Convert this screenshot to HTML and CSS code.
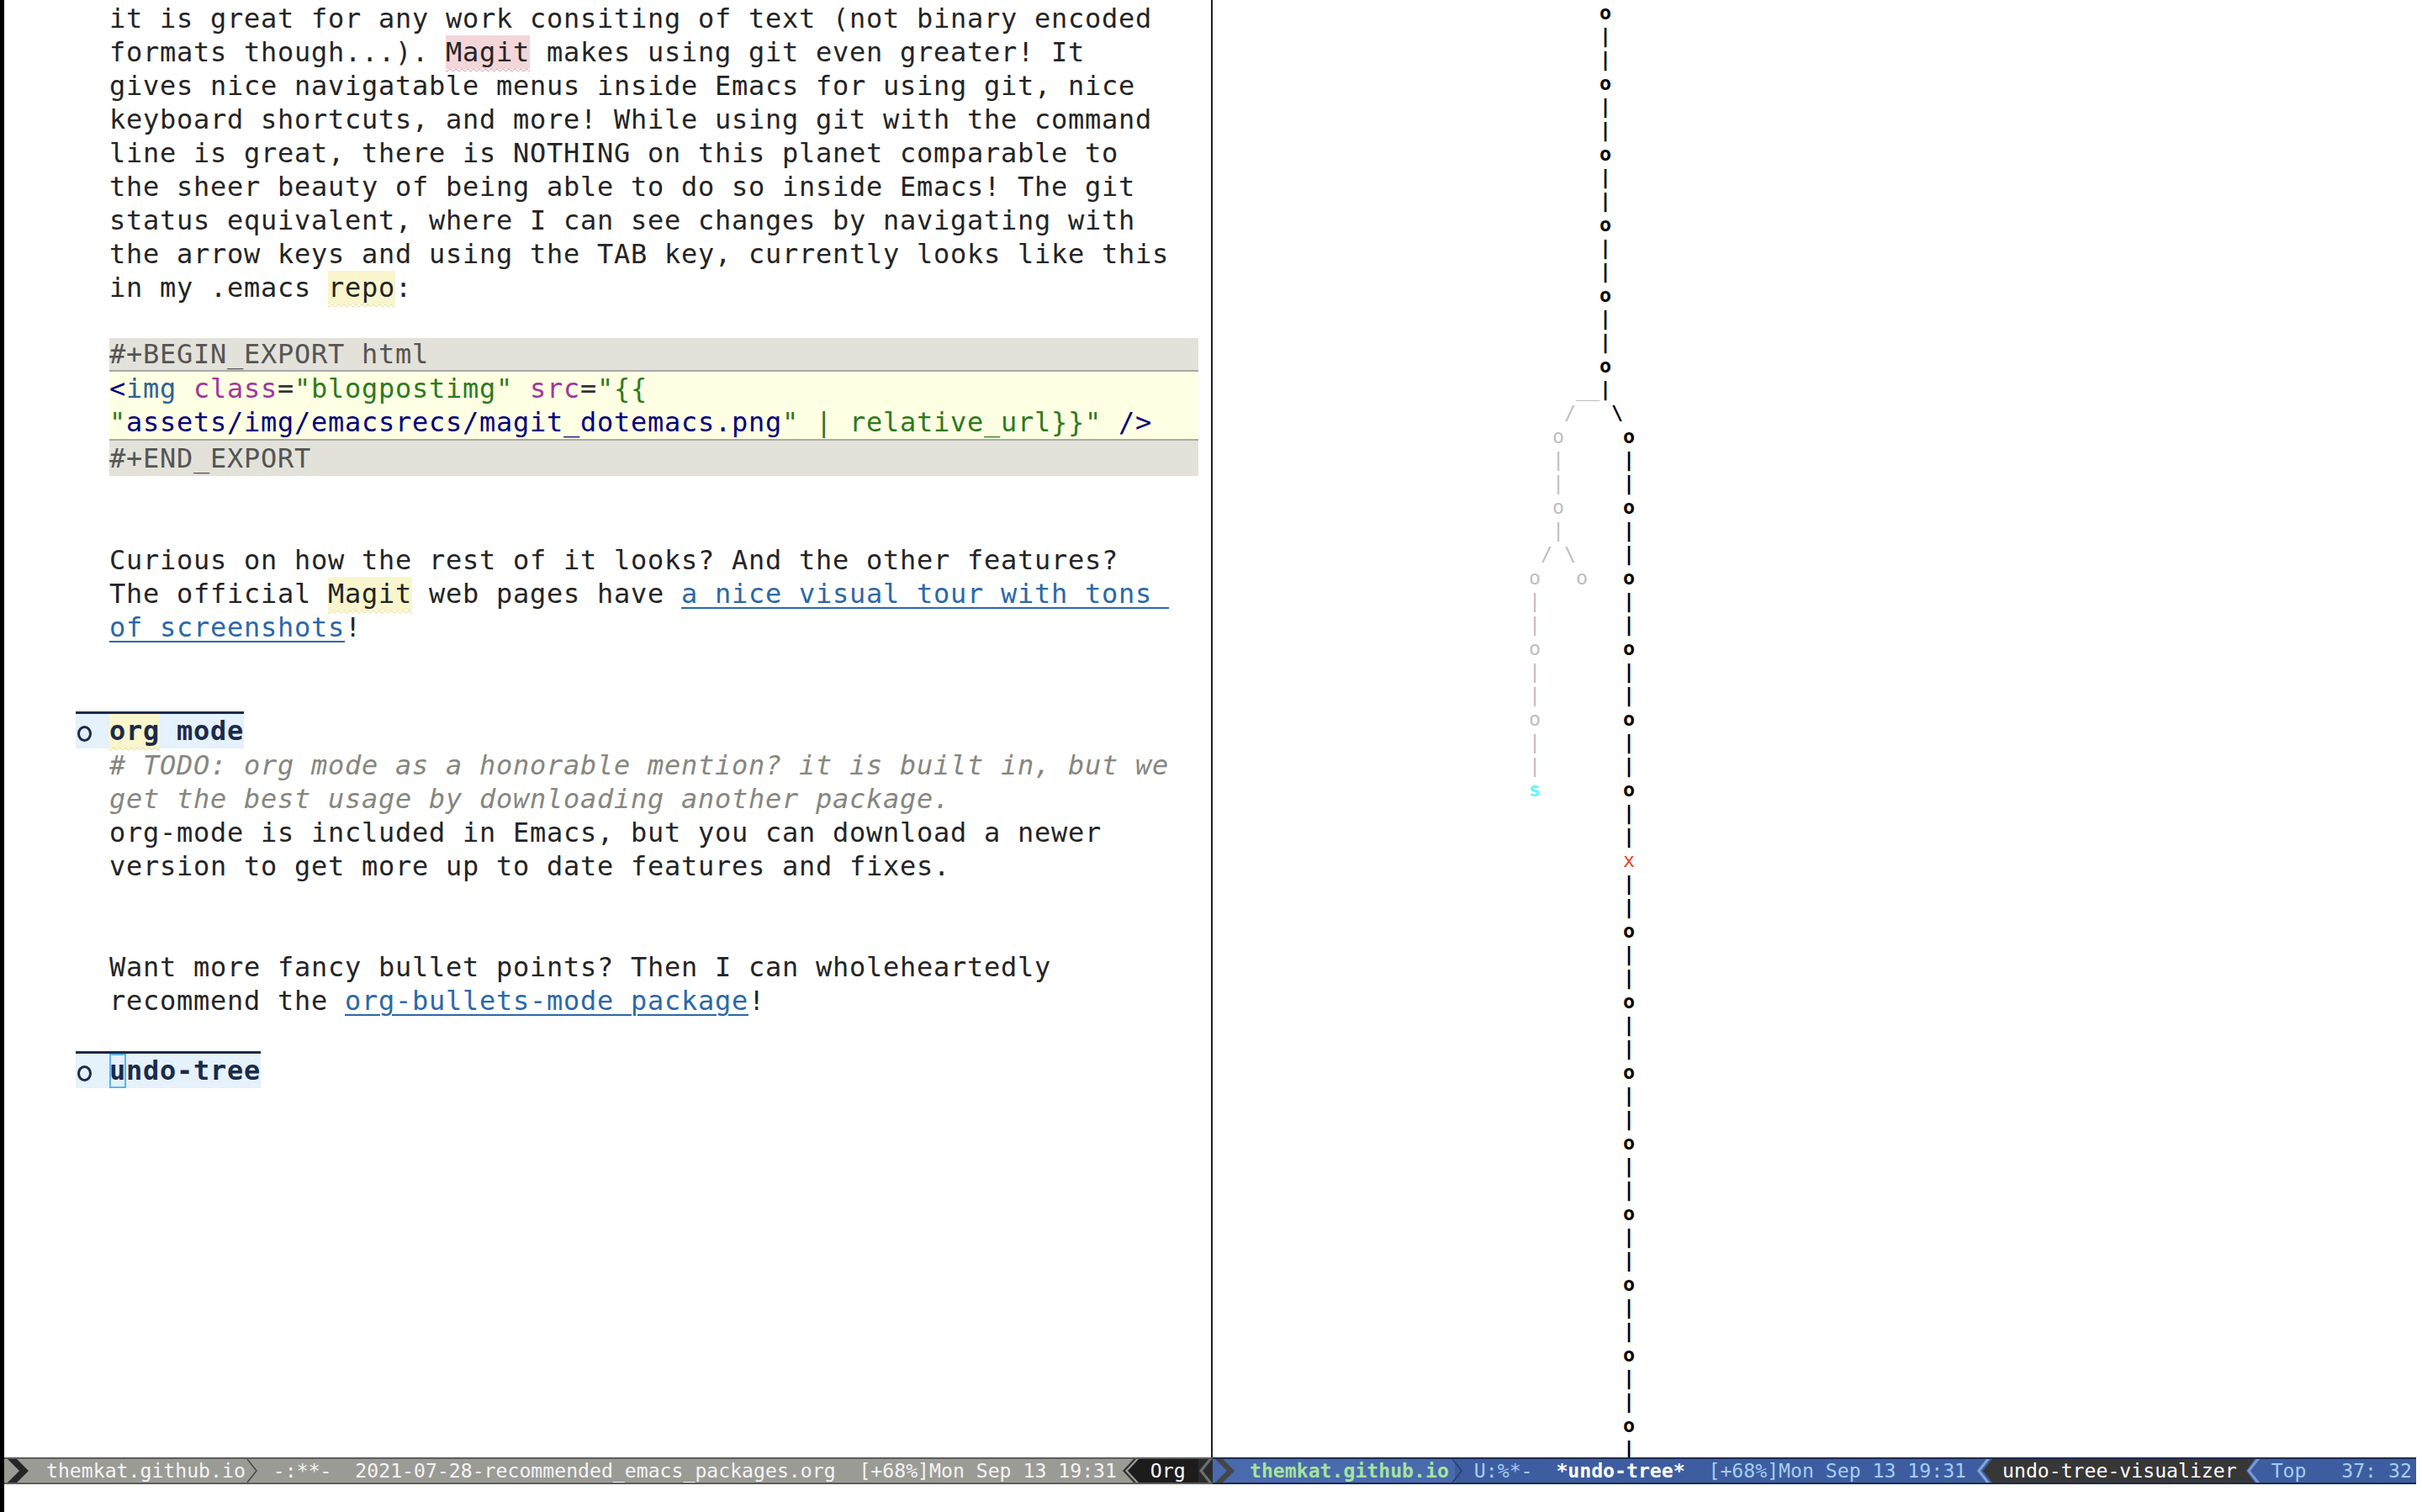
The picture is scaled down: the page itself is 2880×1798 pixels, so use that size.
FILE: index.html
```html
<!DOCTYPE html>
<html>
<head>
<meta charset="utf-8">
<title>Emacs - recommended packages</title>
<link rel="stylesheet" href="styles.css">
</head>
<body>
<div class="frame">
  <div class="fringe-strip"></div>
  <div class="main">
    <div class="windows">
      <div class="window window-left">
        <div class="buffer buffer-org">
<div class="line body">it is great for any work consiting of text (not binary encoded</div>
<div class="line body">formats though...). <span class="sp sp-red">Magit</span> makes using git even greater! It</div>
<div class="line body">gives nice navigatable menus inside Emacs for using git, nice</div>
<div class="line body">keyboard shortcuts, and more! While using git with the command</div>
<div class="line body">line is great, there is NOTHING on this planet comparable to</div>
<div class="line body">the sheer beauty of being able to do so inside Emacs! The git</div>
<div class="line body">status equivalent, where I can see changes by navigating with</div>
<div class="line body">the arrow keys and using the TAB key, currently looks like this</div>
<div class="line body">in my .emacs <span class="sp sp-yel">repo</span>:</div>
<div class="line body"></div>
<div class="blk blk-begin">#+BEGIN_EXPORT html</div>
<div class="blk blk-body"><span class="c-tag">&lt;</span><span class="c-name">img</span> <span class="c-attr">class</span><span class="c-eq">=</span><span class="c-str">"blogpostimg"</span> <span class="c-attr">src</span><span class="c-eq">=</span><span class="c-str">"{{</span></div>
<div class="blk blk-body"><span class="c-str">"</span><span class="c-tag">assets/img/emacsrecs/magit_dotemacs.png</span><span class="c-str">" | relative_url}}"</span> <span class="c-tag">/&gt;</span></div>
<div class="blk blk-end">#+END_EXPORT</div>
<div class="line body"></div>
<div class="line body"></div>
<div class="line body">Curious on how the rest of it looks? And the other features?</div>
<div class="line body">The official <span class="sp sp-yel">Magit</span> web pages have <span class="link">a nice visual tour with tons </span></div>
<div class="line body"><span class="link">of screenshots</span>!</div>
<div class="line body"></div>
<div class="line body"></div>
<div class="line-heading"><div class="hl"><span class="bullet-cell"><span class="ring"></span></span><span class="hl-text"><span class="sp sp-yel sp-h">org</span> mode</span></div></div>
<div class="line body comment"># TODO: org mode as a honorable mention? it is built in, but we</div>
<div class="line body comment">get the best usage by downloading another package.</div>
<div class="line body">org-mode is included in Emacs, but you can download a newer</div>
<div class="line body">version to get more up to date features and fixes.</div>
<div class="line body"></div>
<div class="line body"></div>
<div class="line body">Want more fancy bullet points? Then I can wholeheartedly</div>
<div class="line body">recommend the <span class="link">org-bullets-mode package</span>!</div>
<div class="line body"></div>
<div class="line-heading"><div class="hl"><span class="bullet-cell"><span class="ring"></span></span><span class="hl-text"><span class="cursor">u</span>ndo-tree</span></div></div>
        </div>
        <div class="modeline ml-left">
          <svg class="ml-svg" width="32" height="28" viewBox="0 0 32 28"><polygon points="4,0 15,0 29,14 15,28 4,28 18,14" fill="#262626"/></svg>
          <span class="ml-host">themkat.github.io</span>
          <svg class="ml-svg" width="33" height="28" viewBox="0 0 33 28"><polyline points="2,0 13,14 2,28" fill="none" stroke="#474747" stroke-width="1.5"/></svg>
          <span class="ml-body">-:**-  2021-07-28-recommended_emacs_packages.org  [+68%]Mon Sep 13 19:31</span>
          <svg class="ml-svg" width="26" height="28" viewBox="0 0 26 28"><polygon points="26,0 26,28 13,14" fill="#1c1c1c"/><polygon points="20,0 23,0 10,14 23,28 20,28 7,14" fill="#303030"/></svg>
          <span class="ml-org"> Org </span>
          <svg class="ml-svg ml-fill" width="17" height="28" viewBox="0 0 17 28" preserveAspectRatio="none"><rect x="0" y="0" width="17" height="28" fill="#2b2b2b"/><polygon points="12,0 16,0 5,14 16,28 12,28 1,14" fill="#6e6e6e"/></svg>
        </div>
      </div>
      <div class="window window-right">
        <div class="buffer buffer-tree">
<div class="r">      <b>o</b></div>
<div class="r">      <b>|</b></div>
<div class="r">      <b>|</b></div>
<div class="r">      <b>o</b></div>
<div class="r">      <b>|</b></div>
<div class="r">      <b>|</b></div>
<div class="r">      <b>o</b></div>
<div class="r">      <b>|</b></div>
<div class="r">      <b>|</b></div>
<div class="r">      <b>o</b></div>
<div class="r">      <b>|</b></div>
<div class="r">      <b>|</b></div>
<div class="r">      <b>o</b></div>
<div class="r">      <b>|</b></div>
<div class="r">      <b>|</b></div>
<div class="r">      <b>o</b></div>
<div class="r">    <i>__</i><b>|</b></div>
<div class="r">   <i>/</i>   <b>\</b></div>
<div class="r">  <i>o</i>     <b>o</b></div>
<div class="r">  <i>|</i>     <b>|</b></div>
<div class="r">  <i>|</i>     <b>|</b></div>
<div class="r">  <i>o</i>     <b>o</b></div>
<div class="r">  <i>|</i>     <b>|</b></div>
<div class="r"> <i>/ \</i>    <b>|</b></div>
<div class="r"><i>o   o</i>   <b>o</b></div>
<div class="r"><i>|</i>       <b>|</b></div>
<div class="r"><i>|</i>       <b>|</b></div>
<div class="r"><i>o</i>       <b>o</b></div>
<div class="r"><i>|</i>       <b>|</b></div>
<div class="r"><i>|</i>       <b>|</b></div>
<div class="r"><i>o</i>       <b>o</b></div>
<div class="r"><i>|</i>       <b>|</b></div>
<div class="r"><i>|</i>       <b>|</b></div>
<div class="r"><span class="saved">s</span>       <b>o</b></div>
<div class="r">        <b>|</b></div>
<div class="r">        <b>|</b></div>
<div class="r">        <span class="current">x</span></div>
<div class="r">        <b>|</b></div>
<div class="r">        <b>|</b></div>
<div class="r">        <b>o</b></div>
<div class="r">        <b>|</b></div>
<div class="r">        <b>|</b></div>
<div class="r">        <b>o</b></div>
<div class="r">        <b>|</b></div>
<div class="r">        <b>|</b></div>
<div class="r">        <b>o</b></div>
<div class="r">        <b>|</b></div>
<div class="r">        <b>|</b></div>
<div class="r">        <b>o</b></div>
<div class="r">        <b>|</b></div>
<div class="r">        <b>|</b></div>
<div class="r">        <b>o</b></div>
<div class="r">        <b>|</b></div>
<div class="r">        <b>|</b></div>
<div class="r">        <b>o</b></div>
<div class="r">        <b>|</b></div>
<div class="r">        <b>|</b></div>
<div class="r">        <b>o</b></div>
<div class="r">        <b>|</b></div>
<div class="r">        <b>|</b></div>
<div class="r">        <b>o</b></div>
<div class="r">        <b>|</b></div>
        </div>
        <div class="modeline ml-right">
          <span class="mr-seg"><svg class="ml-svg" width="30" height="28" viewBox="0 0 30 28"><polygon points="3,0 12,0 26,14 12,28 3,28 17,14" fill="#464646"/></svg><span class="mr-host">themkat.github.io</span></span>
          <svg class="ml-svg" width="27" height="28" viewBox="0 0 27 28"><rect x="0" y="0" width="4" height="28" fill="#4a6aae"/><polyline points="1,0 12,14 1,28" fill="none" stroke="#2a3e6c" stroke-width="1.5"/></svg>
          <span class="mr-dim">U:%*-  </span><span class="mr-buf">*undo-tree*</span><span class="mr-dim">  [+68%]Mon Sep 13 19:31</span>
          <svg class="ml-svg" width="31" height="28" viewBox="0 0 31 28"><polygon points="31,0 31,28 20,14" fill="#373737"/><polygon points="24,0 28,0 17,14 28,28 24,28 13,14" fill="#86a3d8"/></svg>
          <span class="mr-mode">undo-tree-visualizer</span>
          <svg class="ml-svg" width="22" height="28" viewBox="0 0 22 28"><polygon points="0,0 10,0 0,14" fill="#373737"/><polygon points="0,14 10,28 0,28" fill="#373737"/><polygon points="12,0 16,0 5,14 16,28 12,28 1,14" fill="#7a98d2"/></svg>
          <span class="mr-pos">Top   37: 32</span>
        </div>
      </div>
    </div>
    <div class="echo"></div>
  </div>
</div>
</body>
</html>
```

FILE: styles.css
```css
* { box-sizing: border-box; }
html, body { margin: 0; padding: 0; }
body {
  width: 2880px;
  height: 1798px;
  overflow: hidden;
  background: #ffffff;
  font-family: "DejaVu Sans Mono", "Liberation Mono", monospace;
}
.frame { display: flex; height: 1798px; }
.fringe-strip { width: 5px; flex: none; background: #000; }
.main { flex: 1; display: flex; flex-direction: column; min-width: 0; }
.windows { display: flex; height: 1765px; flex: none; }
.window { display: flex; flex-direction: column; min-width: 0; }
.window-left { width: 1437px; flex: none; }
.window-right { flex: 1; }
.buffer { flex: 1; overflow: hidden; white-space: normal; }
.echo { height: 33px; background: #fff; }

/* ---------- org buffer ---------- */
.buffer-org {
  border-right: 2px solid #1e1e1e;
  padding: 2px 0 0 85px;
  font-size: 32px;
  letter-spacing: 0.734px;
  line-height: 40px;
  color: #242424;
}
.line, .blk, .hl-text, .r { white-space: pre; }
.line { height: 40px; }
.body { padding-left: 40px; }
.comment { color: #86867e; font-style: italic; }

.sp {
  display: inline-block;
  text-decoration-line: underline;
  text-decoration-style: wavy;
  text-decoration-thickness: 1px;
  text-underline-offset: 8px;
}
.sp-red { background: #f3d6d9; text-decoration-color: #e48a8e; }
.sp-yel { background: #f9f5cd; text-decoration-color: #e6d66e; }

.link {
  color: #2b68a8;
  text-decoration: underline;
  text-decoration-thickness: 2px;
  text-underline-offset: 5px;
}

.blk { margin-left: 40px; width: 1295px; }
.blk-begin {
  height: 40px;
  line-height: 38px;
  background: #e3e2da;
  color: #555555;
  border-bottom: 2px solid #a9a9a9;
}
.blk-body { height: 40px; background: #ffffe3; }
.blk-end {
  height: 44px;
  line-height: 42px;
  background: #e3e2da;
  color: #555555;
  border-top: 2px solid #a9a9a9;
}
.c-tag { color: #00007f; }
.c-name { color: #2c6496; }
.c-attr { color: #a2379d; }
.c-str { color: #2c7a1d; }
.c-eq { color: #333; }

.line-heading { display: flex; height: 44px; }
.hl {
  display: flex;
  height: 44px;
  border-top: 3px solid #1b2b4b;
  background: #e5f1fb;
  color: #1b2b4b;
  font-weight: bold;
  line-height: 41px;
}
.bullet-cell { width: 40px; padding: 14px 0 0 2px; display: block; }
.ring {
  display: block;
  width: 17px;
  height: 19px;
  border: 3.5px solid #1b2b4b;
  border-radius: 50%;
}
.hl-text { display: block; }
.sp-h { line-height: 41px; height: 41px; }
.cursor {
  display: inline-block;
  height: 41px;
  box-shadow: inset 0 0 0 2px #5ab4f2;
}

/* ---------- undo tree ---------- */
.buffer-tree {
  padding: 1px 0 0 376px;
  font-size: 23.25px;
  line-height: 28px;
  color: #000;
}
.r { height: 28px; }
.r b { font-weight: bold; color: #000; }
.r i { font-style: normal; color: #bdbdbd; }
.saved { color: #5ff6ff; font-weight: bold; }
.current { color: #e8412a; }

/* ---------- mode lines ---------- */
.modeline {
  height: 32px;
  flex: none;
  display: flex;
  align-items: stretch;
  font-size: 23.15px;
  line-height: 28px;
  white-space: normal;
  border-top: 2px solid;
  border-bottom: 2px solid;
  overflow: hidden;
}
.modeline span { white-space: pre; }
.ml-svg { display: block; flex: none; }
.ml-fill { flex: 1; }
.ml-left { background: #9b9b96; border-color: #5c5c5c; color: #f4f4f4; }
.ml-host { padding-left: 18px; }
.ml-org { background: #1c1c1c; color: #ffffff; padding: 0 1px 0 0; }

.ml-right { background: #3d5da0; border-color: #1d2c4e; width: 1431px; color: #a5cdf0; }
.mr-seg { display: flex; background: #4a6aae; padding-right: 3px; }
.mr-host { padding-left: 14px; color: #a3e59c; font-weight: bold; }
.mr-dim { color: #a5cdf0; }
.mr-buf { color: #ffffff; font-weight: bold; }
.mr-mode { background: #373737; color: #ffffff; padding: 0 11px 0 12px; }
.mr-pos { padding-left: 8px; color: #a5cdf0; }
```
